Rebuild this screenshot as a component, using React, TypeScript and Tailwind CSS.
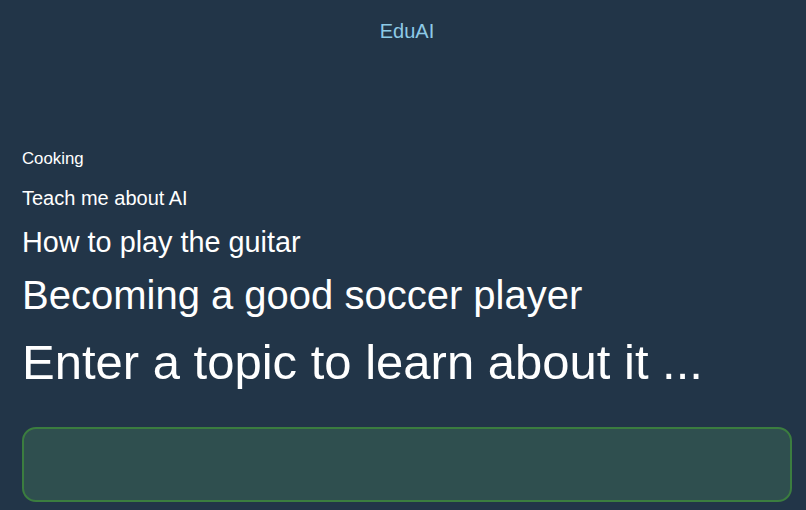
export default function App() {
  return (
    <div
      className="min-h-[510px] bg-[#223548] pl-[22px] pr-[14px] text-white"
      style={{ fontFamily: '"Liberation Sans", Arial, sans-serif' }}
    >
      <header className="pt-[20px] text-center text-[20px] leading-[23px] text-[#8ecae6]">
        EduAI
      </header>

      <main className="pt-[106px]">
        <div className="flex flex-col leading-[1.15]">
          <p className="text-[16.8px]">Cooking</p>
          <p className="mt-[19px] text-[20px]">Teach me about AI</p>
          <p className="mt-[16px] text-[28.8px]">How to play the guitar</p>
          <p className="mt-[13px] text-[40px]">Becoming a good soccer player</p>
          <p className="mt-[16px] text-[49px]">Enter a topic to learn about it ...</p>
        </div>

        <div className="mt-[36px] h-[75px] rounded-[14px] border-2 border-[#3b7d3f] bg-[#2f4f4f]" />
      </main>
    </div>
  );
}
